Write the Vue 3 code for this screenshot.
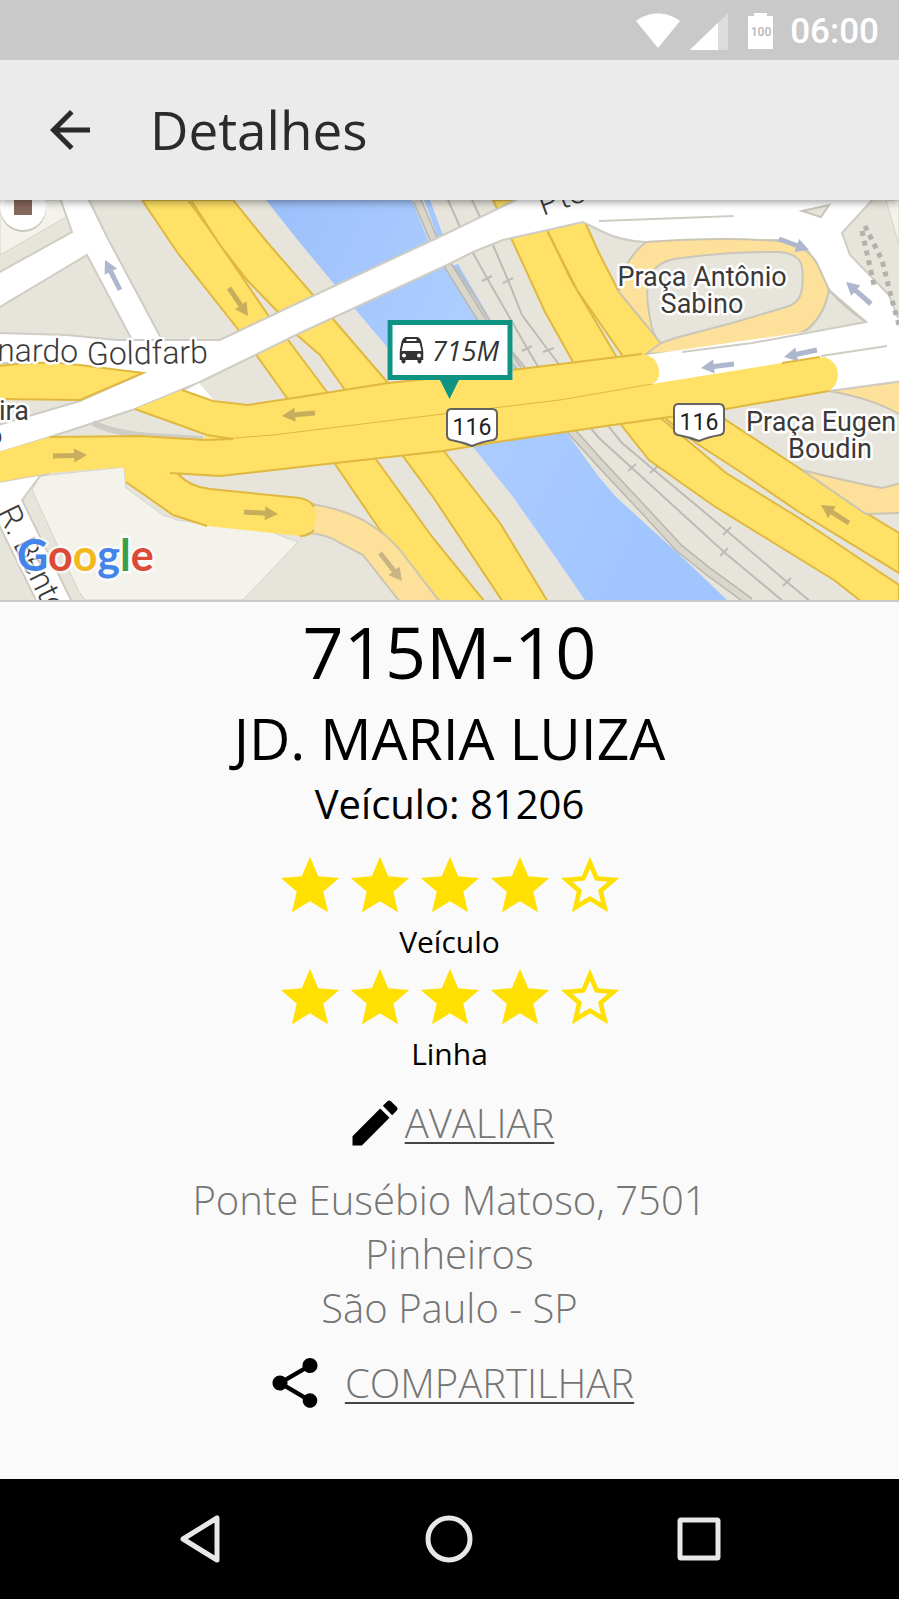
<template>
  <div class="screen">
    <header class="status-bar">
      <svg class="status-wifi" viewBox="0 0 44 36" aria-label="Wi-Fi">
        <path d="M0 8C13-2 31-2 44 8L22 35z" fill="#fff" />
      </svg>
      <svg class="status-signal" viewBox="0 0 38 37" aria-label="Sinal">
        <path d="M0 37L38 0V37z" fill="#dcdcdc" />
        <path d="M0 37L28 9.700V37z" fill="#fff" />
      </svg>
      <svg class="status-battery" viewBox="0 0 25 36" aria-label="Bateria">
        <path d="M0 3H6V0H19V3H25V36H0z" fill="#fff" />
        <text x="13" y="23" class="battery-text">100</text>
      </svg>
      <span class="status-time">06:00</span>
    </header>

    <div class="app-bar">
      <button class="back-button" aria-label="Voltar">
        <svg viewBox="0 0 24 24">
          <path d="M20 11H7.830l5.590-5.590L12 4l-8 8 8 8 1.410-1.410L7.830 13H20v-2z" fill="#2b2b2b" />
        </svg>
      </button>
      <h1 class="app-title">Detalhes</h1>
    </div>

    <section class="map">
      <svg class="map-canvas" viewBox="0 200 899 400" preserveAspectRatio="xMidYMid slice">
        <defs>
          <linearGradient id="river" x1="0" y1="0" x2="1" y2="0.400">
            <stop offset="0" stop-color="#9cc0fb" />
            <stop offset="0.500" stop-color="#aeceff" />
            <stop offset="1" stop-color="#a1c5ff" />
          </linearGradient>
        </defs>
        <rect y="200" width="899" height="400" fill="#e7e5db" />

        <!-- quadras claras -->
        <path class="block" d="M0 200H60L68 216L0 255z" />
        <path class="block" d="M40 476L124 467L126 488L163 515L177 520L230 527L263 529L298 542L243 600H85L78 590L32 490z" />
        <path class="block" d="M886 200H899V245z" />

        <!-- rio -->
        <path fill="url(#river)" d="M266 200L300 243L355 309L387 347L473 447L513 497L549 548L585 600H727L682 557L616 497L599 477L567 433L480 318L447 267L428 240L412 200z" />
        <path fill="#a5c8fe" d="M424 200H430L443 235L438 238z" />
        <path fill="#a5c8fe" d="M452 266L458 264L482 305L492 322z" />
        <path class="trail-edge" d="M417 200L434 240L449 267L482 320L573 433L599 462L642 508L679 548L709 572L750 602" />
        <path class="trail" d="M417 200L434 240L449 267L482 320L573 433L599 462L642 508L679 548L709 572L750 602" />

        <!-- trilhos -->
        <g class="rails">
          <path d="M448 200L460 227L473 253L487 278L527 348L537 365L599 438L632 468L724 552L754 577L784 602" />
          <path d="M472 200L480 217L493 245L508 280L522 315L548 350L558 363L609 427L622 443L654 470L727 531L787 582L811 602" />
          <path d="M457 268L488 318L521 367" />
          <path d="M482 281L492 276M503 283L513 278M522 351L532 346M543 352L554 348M628 471L636 464M650 473L658 466M720 556L728 548M723 535L731 527M783 586L791 578" />
        </g>

        <!-- vias expressas norte-sul -->
        <g class="yellow">
          <path d="M142 200L177 252L237 328L287 398L335 464L380 530L440 602H485L433 538L375 458L327 392L288 340L268 315L217 240L188 200z" />
          <path d="M191 200L220 245L247 280L278 312L297 335L320 355L345 390L402 455L433 497L503 602H548L500 523L444 451L388 383L333 319L313 295L267 242L233 200z" />
          <path d="M493 200L512 240L545 312L573 362L622 426L649 460L714 506L834 580L862 602H899V585L799 518L726 473L662 419L616 356L570 278L548 232L535 200z" />
          <path d="M535 200L548 232L577 290L622 355L667 420L696 443L742 473L799 512L899 573V533L866 513L802 470L726 420L661 343L619 292L599 253L575 200z" />
        </g>

        <!-- alças e acessos -->
        <path class="peach" d="M802 470Q850 482 882 488L902 483V513L866 514z" />
        <path class="peach" d="M829 391L902 381V416Q875 399 829 391z" />
        <path class="peach" d="M305 503Q340 508 363 520Q388 535 400 550L440 602H400L363 555L340 543Q325 533 305 533z" />

        <!-- ruas brancas -->
        <path class="street" d="M60 198L72 232L-2 273V308L87 255L132 340H162L107 237L88 198z" />
        <path class="street" d="M-2 333L67 335L117 340H220L300 302L435 239L520 198H874L842 233L850 255L889 295L902 328V381L829 391L646 384V354L682 352L752 343L866 322L829 290L809 252L779 240L646 242Q619 241 599 230L583 222L503 240L473 252L447 265L350 310L300 333L200 382L135 409L93 423L50 437L-2 453V425L80 401L143 373L40 363H-2z" />
        <path class="street" d="M-2 482L50 473L40 476L22 500L72 602H37L-2 523z" />
        <path class="yellow-shape" d="M-2 366Q40 360 80 365L143 373L80 400L-2 399z" />
        <path fill="#fff" d="M185 391L199 383L216 403z" />

        <!-- alça da praça -->
        <path class="peach" d="M646 242Q729 236 786 242Q812 248 820 270L829 290Q824 318 806 330Q788 340 766 343L682 352L646 354L661 343L619 292Q621 262 646 242z" />
        <path class="block-loop" d="M682 258Q732 251 779 252Q801 254 802 268Q804 282 801 293Q799 303 786 307L732 323L675 338L661 343Q652 335 650 318Q645 292 649 278Q656 260 682 258z" />
        <path class="block-loop" d="M829 290Q845 308 866 322L799 336Q824 320 829 290z" />
        <path fill="#fff" d="M646 355L866 323L899 318V380L829 389L646 390z" />
        <path class="line" d="M682 352L752 343L866 322M599 221L734 216M821 356L887 346" />
        <path class="block-loop" d="M802 211L829 205L821 217z" />

        <!-- ponte leste-oeste -->
        <path class="lane" d="M93 423Q120 436 170 437L203 439" />
        <path class="yellow-fill" d="M-2 452L50 437L140 436L203 440L207 435L135 409L182 390L213 401L248 405L300 397L388 383L512 370L642 354Q658 356 659 372Q660 380 652 384L782 363L825 357Q837 362 838 373Q838 385 829 391L726 409L599 427L497 442L443 451L300 467L220 476L178 474Q190 487 210 489L300 498Q316 503 316 517Q316 532 300 536L207 526L173 515L126 482L124 467L50 473L-2 482z" />
        <g class="yellow-edge">
          <path d="M50 437L140 436L205 440L233 439L207 435L135 409M182 390L213 401L248 405L300 397L388 383L512 370L642 354" />
          <path d="M829 391L726 409L599 427L497 442L443 451L300 467L220 476L170 473M178 474Q190 487 210 489L300 498Q311 500 314 507M314 530Q309 536 300 536M207 526L173 515L126 482" />
          <path class="thin" d="M210 440L273 435L443 414L560 400L652 384" />
          <path d="M782 363L820 357" />
        </g>

        <!-- degraus -->
        <path class="steps" d="M862 231L874 285" />
        <path class="steps" d="M865 226L882 260L892 300L899 325" />

        <!-- sentido das vias -->
        <g v-for="(a, i) in arrows" :key="i" :transform="arrowTransform(a)" :fill="a.color">
          <path :d="arrowPath(a)" />
        </g>

        <!-- ponto de interesse -->
        <circle cx="23" cy="209" r="23" fill="#c9c7c0" />
        <circle cx="23" cy="207" r="23" fill="#fff" />
        <rect x="14" y="190" width="18" height="25" fill="#86675b" />

        <g class="map-label light">
          <text x="-3" y="361" transform="rotate(1 0 361)">nardo</text>
          <text x="87" y="365" transform="rotate(-1 87 365)">Goldfarb</text>
          <text x="543" y="216" transform="rotate(-20 543 216)">Pte</text>
          <text x="-3" y="512" transform="rotate(64 -3 512)">R. Bento</text>
        </g>
        <g class="map-label">
          <text x="702" y="286" text-anchor="middle">Praça Antônio</text>
          <text x="702" y="313" text-anchor="middle">Sabino</text>
          <text x="746" y="431">Praça Eugen</text>
          <text x="830" y="458" text-anchor="middle">Boudin</text>
          <text x="-1" y="420">ira</text>
          <text x="-13" y="445">o</text>
        </g>

        <g v-for="s in shields" :key="s.x" :transform="`translate(${s.x} ${s.y})`">
          <path d="M5 1H46Q51 1 51 6V27Q51 31 47 32Q35 34 26 38Q16 34 5 32Q1 31 1 27V6Q1 1 5 1z" fill="#fff" stroke="#65635f" stroke-width="2" />
          <text x="26" y="27" class="shield-text">116</text>
        </g>

        <text x="17" y="571" class="map-logo">
          <tspan v-for="(l, i) in logo" :key="i" :fill="l.color">{{ l.char }}</tspan>
        </text>
      </svg>

      <div class="marker">
        <svg class="marker-bus" viewBox="0 0 24 27">
          <path fill="#333" d="M6 0H18Q21 1 22 5L24 15V23H22V25Q20 28 18 25V23H6V25Q4 28 2 25V23H0V15L2 5Q3 1 6 0zM7 2V4H17V2zM4 6L2 14H22L20 6z" />
          <circle cx="4.500" cy="18.500" r="2" fill="#fff" />
          <circle cx="19.500" cy="18.500" r="2" fill="#fff" />
        </svg>
        <span>715M</span>
      </div>
    </section>

    <main class="details">
      <h2 class="line-code">715M-10</h2>
      <p class="line-name">JD. MARIA LUIZA</p>
      <p class="vehicle">Veículo: 81206</p>

      <div class="ratings">
        <div v-for="rating in ratings" :key="rating.label" class="rating">
          <div class="stars" role="img" :aria-label="`${rating.value} de 5`">
            <svg v-for="n in 5" :key="n" class="star" viewBox="0 0 24 24">
              <path :d="n <= rating.value ? starFull : starEmpty" fill="#ffe000" />
            </svg>
          </div>
          <span class="rating-label">{{ rating.label }}</span>
        </div>
      </div>

      <a href="#" class="action">
        <svg class="action-icon" viewBox="0 0 24 24">
          <path d="M3 17.250V21h3.750L17.810 9.940l-3.750-3.750L3 17.250zM20.710 7.040c.39-.39.39-1.020 0-1.410l-2.340-2.340c-.39-.39-1.020-.39-1.410 0l-1.830 1.830 3.750 3.750 1.830-1.830z" />
        </svg>
        <span class="action-text">AVALIAR</span>
      </a>

      <address class="address">
        <span v-for="line in address" :key="line">{{ line }}</span>
      </address>

      <a href="#" class="action action-share">
        <svg class="action-icon" viewBox="0 0 24 24">
          <path d="M18 16.080c-.76 0-1.440.3-1.960.77L8.910 12.700c.05-.23.09-.46.09-.7s-.04-.47-.09-.7l7.050-4.110c.54.5 1.250.81 2.040.81 1.660 0 3-1.340 3-3s-1.340-3-3-3-3 1.340-3 3c0 .24.04.47.09.7L8.040 9.810C7.500 9.310 6.790 9 6 9c-1.660 0-3 1.340-3 3s1.340 3 3 3c.79 0 1.500-.31 2.040-.81l7.120 4.160c-.05.21-.08.43-.08.65 0 1.610 1.310 2.920 2.920 2.920s2.920-1.310 2.920-2.920-1.310-2.920-2.920-2.920z" />
        </svg>
        <span class="action-text">COMPARTILHAR</span>
      </a>
    </main>

    <nav class="nav-bar">
      <button aria-label="Voltar">
        <svg viewBox="0 0 50 50"><path d="M42 4V46L8 25z" /></svg>
      </button>
      <button aria-label="Início">
        <svg viewBox="0 0 50 50"><circle cx="25" cy="25" r="21" /></svg>
      </button>
      <button aria-label="Recentes">
        <svg viewBox="0 0 50 50"><rect x="6" y="6" width="38" height="38" rx="1" /></svg>
      </button>
    </nav>
  </div>
</template>

<script setup>
import { ref } from 'vue'

const ratings = ref([
  { label: 'Veículo', value: 4 },
  { label: 'Linha', value: 4 }
])

const address = ['Ponte Eusébio Matoso, 7501', 'Pinheiros', 'São Paulo - SP']

const starFull = 'M12 17.270L18.180 21l-1.640-7.030L22 9.240l-7.190-.61L12 2 9.190 8.630 2 9.240l5.460 4.730L5.820 21z'
const starEmpty = 'M22 9.240l-7.190-.62L12 2 9.190 8.630 2 9.240l5.460 4.730L5.820 21 12 17.270 18.180 21l-1.630-7.030L22 9.240zM12 15.400l-3.760 2.270 1-4.280-3.320-2.880 4.380-.38L12 6.100l1.710 4.040 4.380.38-3.320 2.880 1 4.280L12 15.400z'

const shields = [
  { x: 446, y: 408 },
  { x: 673, y: 403 }
]

const logo = [
  { char: 'G', color: '#4384ea' },
  { char: 'o', color: '#dc4a38' },
  { char: 'o', color: '#f2b91d' },
  { char: 'g', color: '#4384ea' },
  { char: 'l', color: '#34a04f' },
  { char: 'e', color: '#dc4a38' }
]

const blue = '#adb8cf'
const tan = '#c6ae5c'

const arrows = [
  { from: [120, 290], to: [105, 260], color: blue },
  { from: [229, 288], to: [248, 316], color: tan },
  { from: [315, 413], to: [282, 416], color: tan },
  { from: [53, 456], to: [87, 455], color: tan },
  { from: [244, 512], to: [278, 514], color: tan },
  { from: [380, 553], to: [402, 581], color: '#c9b583' },
  { from: [779, 239], to: [809, 250], color: blue },
  { from: [871, 304], to: [846, 282], color: blue },
  { from: [817, 350], to: [784, 357], color: blue },
  { from: [734, 364], to: [701, 368], color: blue },
  { from: [849, 523], to: [821, 505], color: tan }
]

const arrowTransform = ({ from, to }) => {
  const angle = Math.atan2(to[1] - from[1], to[0] - from[0]) * 180 / Math.PI
  return `translate(${from[0]} ${from[1]}) rotate(${angle})`
}

const arrowPath = ({ from, to }) => {
  const len = Math.hypot(to[0] - from[0], to[1] - from[1])
  return `M0 -2.500H${len - 13}V-7L${len} 0L${len - 13} 7V2.500H0z`
}
</script>

<style>
body {
  margin: 0;
  background: #fafafa;
}
</style>

<style scoped>
.screen {
  min-height: 100vh;
  display: flex;
  flex-direction: column;
  background: #fafafa;
  color: #000;
  font-family: "Open Sans", "Noto Sans", sans-serif;
}
.status-bar {
  position: relative;
  z-index: 2;
  height: 60px;
  padding: 2px 20px 0;
  box-sizing: border-box;
  display: flex;
  align-items: center;
  justify-content: flex-end;
  background: #c9c9c9;
}
.status-wifi {
  width: 44px;
  height: 36px;
  margin-right: 10px;
}
.status-signal {
  width: 38px;
  height: 37px;
  margin-right: 20px;
}
.status-battery {
  width: 25px;
  height: 36px;
  margin-right: 17px;
}
.battery-text {
  font-family: Roboto, sans-serif;
  font-size: 12px;
  font-weight: 500;
  fill: #b5b5b5;
  text-anchor: middle;
}
.status-time {
  font-family: Roboto, sans-serif;
  font-size: 35px;
  font-weight: 500;
  color: #fff;
}
.app-bar {
  position: relative;
  z-index: 1;
  height: 140px;
  padding: 0 40px;
  box-sizing: border-box;
  display: flex;
  align-items: center;
  gap: 50px;
  background: #ebebeb;
  box-shadow: 0 2px 8px rgba(0, 0, 0, 0.4);
}
.back-button {
  width: 60px;
  height: 60px;
  padding: 0;
  border: none;
  background: transparent;
  cursor: pointer;
}
.back-button svg {
  display: block;
  width: 100%;
  height: 100%;
}
.app-title {
  margin: 0;
  font-size: 53px;
  font-weight: 400;
  line-height: 68px;
  color: #2b2b2b;
}
.map {
  position: relative;
  height: 400px;
  overflow: hidden;
  border-bottom: 2px solid #c9c9c9;
}
.map-canvas {
  display: block;
  width: 100%;
  height: 100%;
}
.block {
  fill: #f3f2eb;
  stroke: #d5d3ca;
  stroke-width: 1;
}
.block-loop {
  fill: #e7e5db;
  stroke: #c9c6ba;
  stroke-width: 2;
}
.trail-edge,
.trail,
.rails path,
.line,
.lane {
  fill: none;
}
.trail-edge {
  stroke: #b9b6ad;
  stroke-width: 9;
}
.trail {
  stroke: #d9d7cc;
  stroke-width: 6;
}
.rails path {
  stroke: #bdbbb7;
  stroke-width: 2;
}
.yellow path,
.yellow-shape {
  fill: #fee166;
  stroke: #e0b83f;
  stroke-width: 2;
}
.yellow-fill {
  fill: #fee166;
}
.yellow-edge path {
  fill: none;
  stroke: #e0b83f;
  stroke-width: 2;
}
.yellow-edge .thin {
  stroke-width: 1;
}
.peach {
  fill: #fde09a;
  stroke: #cbc6b2;
  stroke-width: 2;
}
.street {
  fill: #fff;
  stroke: #cfccc3;
  stroke-width: 2;
}
.line {
  stroke: #cfccc3;
  stroke-width: 2;
}
.lane {
  stroke: #cdccc6;
  stroke-width: 6;
}
.steps {
  fill: none;
  stroke: #b3b1ab;
  stroke-width: 5;
  stroke-dasharray: 5 5;
}
.map-label {
  font-family: Roboto, sans-serif;
  font-size: 27px;
  fill: #3a3a3a;
  stroke: #fff;
  stroke-width: 5px;
  stroke-linejoin: round;
  paint-order: stroke;
}
.map-label.light {
  font-size: 32px;
  font-weight: 300;
}
.shield-text {
  font-family: Roboto, sans-serif;
  font-size: 23px;
  fill: #222;
  text-anchor: middle;
}
.map-logo {
  font-family: Lato, sans-serif;
  font-size: 43px;
  font-weight: 700;
  stroke: rgba(255, 255, 255, 0.7);
  stroke-width: 5px;
  paint-order: stroke;
}
.marker {
  position: absolute;
  top: 120px;
  left: 50%;
  transform: translateX(-50%);
  width: 125px;
  height: 60px;
  box-sizing: border-box;
  border: 5px solid #0f9382;
  background: #fff;
  display: flex;
  align-items: center;
  justify-content: center;
  gap: 8px;
  font-size: 27px;
  font-style: italic;
  color: #333;
}
.marker::after {
  content: '';
  position: absolute;
  top: calc(100% + 4px);
  left: 50%;
  margin-left: -10px;
  border: 10px solid transparent;
  border-top: 20px solid #0f9382;
  border-bottom: none;
}
.marker-bus {
  width: 24px;
  height: 27px;
}
.details {
  flex: 1;
  padding-bottom: 40px;
  display: flex;
  flex-direction: column;
  align-items: center;
  text-align: center;
}
.line-code,
.line-name,
.vehicle {
  margin: 0;
  font-weight: 400;
}
.line-code {
  font-size: 72px;
  line-height: 98px;
}
.line-name {
  font-size: 57px;
  line-height: 76px;
}
.vehicle {
  font-size: 40px;
  line-height: 56px;
}
.ratings {
  margin: 19px 0 18px;
}
.rating {
  display: flex;
  flex-direction: column;
  align-items: center;
}
.stars {
  display: flex;
}
.star {
  width: 70px;
  height: 70px;
}
.rating-label {
  font-size: 30px;
  line-height: 42px;
}
.action {
  display: flex;
  align-items: center;
  color: #757575;
  font-size: 40px;
  font-weight: 300;
  line-height: 60px;
  text-decoration: none;
}
.action-share {
  gap: 20px;
}
.action-icon {
  width: 60px;
  height: 60px;
  fill: #000;
}
.action-text {
  text-decoration: underline;
  text-decoration-color: #444;
  text-decoration-thickness: 2px;
  text-underline-offset: 4px;
  text-decoration-skip-ink: none;
}
.address {
  margin: 20px 0 18px;
  display: flex;
  flex-direction: column;
  font-size: 40px;
  font-style: normal;
  font-weight: 300;
  line-height: 54px;
  color: #757575;
}
.nav-bar {
  height: 120px;
  padding: 0 75px;
  box-sizing: border-box;
  display: grid;
  grid-template-columns: repeat(3, 1fr);
  background: #000;
}
.nav-bar button {
  display: flex;
  align-items: center;
  justify-content: center;
  padding: 0;
  border: none;
  background: transparent;
  cursor: pointer;
}
.nav-bar svg {
  width: 50px;
  height: 50px;
  fill: none;
  stroke: #e8e8e8;
  stroke-width: 5;
  stroke-linejoin: round;
}
</style>
